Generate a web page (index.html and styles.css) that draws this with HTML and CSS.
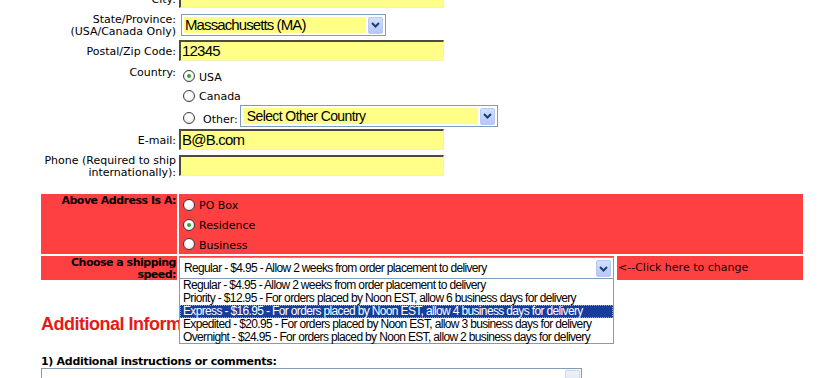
FILE: index.html
```html
<!DOCTYPE html>
<html>

<head>
  <meta charset="utf-8">
  <title>Shipping Information</title>
  <link rel="stylesheet" href="styles.css">
</head>

<body>
  <div id="wrap">
    <div class="row city">
      <div class="lbl">City:</div>
      <div class="fld"><div class="input"></div></div>
    </div>

    <div class="row state">
      <div class="lbl two">State/Province:<br>(USA/Canada Only)</div>
      <div class="fld">
        <div class="select stateSel">
          <span class="selText">Massachusetts (MA)</span>
          <span class="arrow"><svg width="9" height="6" viewBox="0 0 9 6"><path d="M1 1 L4.5 4.5 L8 1" fill="none" stroke="#1d3c78" stroke-width="2"/></svg></span>
        </div>
      </div>
    </div>

    <div class="row postal">
      <div class="lbl mid">Postal/Zip Code:</div>
      <div class="fld"><div class="input">12345</div></div>
    </div>

    <div class="row country">
      <div class="lbl">Country:</div>
      <div class="fld opts">
        <div class="opt first"><span class="radio on"></span><span class="optText">USA</span></div>
        <div class="opt second"><span class="radio"></span><span class="optText">Canada</span></div>
        <div class="opt other">
          <span class="radio"></span><span class="optText">Other:</span>
          <div class="select otherSel">
            <span class="selText">Select Other Country</span>
            <span class="arrow"><svg width="9" height="6" viewBox="0 0 9 6"><path d="M1 1 L4.5 4.5 L8 1" fill="none" stroke="#1d3c78" stroke-width="2"/></svg></span>
          </div>
        </div>
      </div>
    </div>

    <div class="row email">
      <div class="lbl mid">E-mail:</div>
      <div class="fld"><div class="input">B@B.com</div></div>
    </div>

    <div class="row phone">
      <div class="lbl two">Phone (Required to ship<br>internationally):</div>
      <div class="fld"><div class="input"></div></div>
    </div>

    <div class="row red addrType">
      <div class="lbl bold">Above Address Is A:</div>
      <div class="fld opts">
        <div class="opt"><span class="radio"></span><span class="optText">PO Box</span></div>
        <div class="opt"><span class="radio on"></span><span class="optText">Residence</span></div>
        <div class="opt"><span class="radio"></span><span class="optText">Business</span></div>
      </div>
    </div>

    <div class="row red shipping">
      <div class="lbl bold two">Choose a shipping<br>speed:</div>
      <div class="fld shipFld">
        <div class="shipCell">
          <div class="select shipSel">
            <span class="selText">Regular - $4.95 - Allow 2 weeks from order placement to delivery</span>
            <span class="arrow"><svg width="9" height="6" viewBox="0 0 9 6"><path d="M1 1 L4.5 4.5 L8 1" fill="none" stroke="#1d3c78" stroke-width="2"/></svg></span>
          </div>
          <div class="dropList">
            <div class="item">Regular - $4.95 - Allow 2 weeks from order placement to delivery</div>
            <div class="item">Priority - $12.95 - For orders placed by Noon EST, allow 6 business days for delivery</div>
            <div class="item sel">Express - $16.95 - For orders placed by Noon EST, allow 4 business days for delivery</div>
            <div class="item">Expedited - $20.95 - For orders placed by Noon EST, allow 3 business days for delivery</div>
            <div class="item">Overnight - $24.95 - For orders placed by Noon EST, allow 2 business days for delivery</div>
          </div>
        </div>
        <div class="note">&lt;--Click here to change</div>
      </div>
    </div>

    <h2 class="sectionTitle">Additional Information</h2>
    <div class="question">1) Additional instructions or comments:</div>
    <div class="comments">
      <div class="scroll"><span class="scrollUp"></span></div>
    </div>
  </div>
</body>

</html>
```

FILE: styles.css
```css
html,
body {
  margin: 0;
  padding: 0;
  background: #fff;
}

body {
  font-family: "DejaVu Sans", Verdana, sans-serif;
  font-size: 11px;
  color: #000;
  overflow: hidden;
}

#wrap {
  width: 762px;
  margin: -13px 0 0 41px;
}

.row {
  display: grid;
  grid-template-columns: 136px 624px;
  column-gap: 2px;
  align-items: start;
}

.lbl {
  text-align: right;
  padding-right: 1px;
  line-height: 13px;
}

.lbl.two {
  line-height: 12px;
}

.lbl.mid {
  padding-top: 5px;
}

.lbl.bold {
  font-weight: bold;
  letter-spacing: -0.5px;
}

/* text inputs */
.input {
  width: 265px;
  height: 21px;
  box-sizing: border-box;
  background: #ffff88;
  border-top: 2px solid #4b4b40;
  border-left: 2px solid #4b4b40;
  border-right: 1px solid #f2f2c0;
  border-bottom: 1px solid #f2f2c0;
  font-family: "Liberation Sans", Arial, sans-serif;
  font-size: 15px;
  letter-spacing: -0.8px;
  line-height: 18px;
  padding-left: 1px;
}

.city {
  margin-bottom: 6px;
}

.city .lbl {
  padding-top: 6px;
}

.state {
  margin-bottom: 2px;
}

.postal {
  margin-bottom: 5px;
}

.country {
  margin-bottom: 2px;
}

.email {
  margin-bottom: 5px;
}

.phone {
  margin-bottom: 15px;
}

/* selects */
.select {
  display: flex;
  align-items: center;
  box-sizing: border-box;
  border: 1px solid #7f9db9;
  padding: 2px;
  font-family: "Liberation Sans", Arial, sans-serif;
}

.selText {
  flex: 1;
  align-self: stretch;
  white-space: nowrap;
  overflow: hidden;
}

.arrow {
  width: 15px;
  height: 17px;
  box-sizing: border-box;
  margin-left: 2px;
  border: 1px solid #b7c9f2;
  border-radius: 2px;
  background: linear-gradient(#d2e0fd, #b3c8f6);
  display: flex;
  align-items: center;
  justify-content: center;
  flex: none;
}

.stateSel {
  width: 205px;
  height: 22px;
  margin-left: 2px;
}

.stateSel .selText {
  background: #ffff88;
  font-size: 15px;
  letter-spacing: -0.9px;
  line-height: 16px;
  padding-left: 1px;
}

.otherSel {
  width: 258px;
  height: 22px;
  margin-left: 2px;
}

.otherSel .selText {
  background: #ffff88;
  font-size: 14px;
  letter-spacing: -0.6px;
  line-height: 16px;
  padding-left: 4px;
}

/* radio groups */
.opts {
  display: flex;
  flex-direction: column;
}

.opt {
  display: flex;
  align-items: center;
  height: 20px;
}

.radio {
  width: 12px;
  height: 12px;
  box-sizing: border-box;
  border: 1px solid #3d3d3d;
  border-radius: 50%;
  background: radial-gradient(circle at 45% 40%, #fff 35%, #d6d6d6 100%);
  margin-left: 4px;
  position: relative;
  flex: none;
}

.radio.on::after {
  content: "";
  position: absolute;
  left: 3px;
  top: 3px;
  width: 4px;
  height: 4px;
  border-radius: 50%;
  background: #2fa92f;
}

.optText {
  margin-left: 4px;
  line-height: 13px;
  padding-top: 2px;
}

.country .opt.second {
  height: 19px;
  padding-top: 0;
}

.country .opt.other {
  height: 22px;
  align-items: flex-end;
}

.country .opt.other .radio {
  margin-bottom: 3px;
}

.country .opt.other .optText {
  margin-left: 8px;
  padding-top: 0;
  margin-bottom: 1px;
}

/* red rows */
.red .lbl,
.red .fld {
  background: #ff4040;
}

.addrType {
  height: 60px;
  margin-bottom: 2px;
}

.addrType .lbl,
.addrType .fld {
  height: 60px;
}

.addrType .fld {
  padding-top: 1px;
  box-sizing: border-box;
}

.shipping {
  height: 24px;
}

.shipping .lbl {
  height: 24px;
  box-sizing: border-box;
  padding-top: 1px;
}

.shipping .fld.shipFld {
  background: transparent;
  display: flex;
  gap: 3px;
  height: 24px;
}

.shipCell {
  width: 435px;
  background: #ff4040;
  position: relative;
}

.shipSel {
  margin-top: 1px;
  height: 23px;
  background: #fff;
  padding-left: 4px;
}

.shipSel .selText,
.dropList .item {
  font-size: 12px;
  letter-spacing: -0.65px;
  line-height: 17px;
}

.dropList {
  position: absolute;
  left: 0;
  top: 22px;
  width: 435px;
  height: 66px;
  box-sizing: border-box;
  border: 1px solid #7f9db9;
  background: #fff;
  font-family: "Liberation Sans", Arial, sans-serif;
  z-index: 2;
}

.dropList .item {
  line-height: 13px;
  height: 13px;
  padding-left: 3px;
  white-space: nowrap;
}

.dropList .item.sel {
  background: #163c9c;
  color: #fff;
  outline: 1px dotted #8fa3d8;
  outline-offset: -1px;
}

.note {
  flex: 1;
  background: #ff4040;
  padding-left: 1px;
  line-height: 24px;
  color: #1a0000;
}

/* additional info */
.sectionTitle {
  margin: 33px 0 0;
  font-family: "Liberation Sans", Arial, sans-serif;
  font-size: 18px;
  letter-spacing: -0.5px;
  line-height: 22px;
  color: #e31b1b;
}

.question {
  margin-top: 20px;
  font-weight: bold;
  letter-spacing: -0.3px;
  line-height: 13px;
}

.comments {
  width: 541px;
  height: 40px;
  box-sizing: border-box;
  border: 1px solid #7f9db9;
  display: flex;
  justify-content: flex-end;
}

.scroll {
  width: 16px;
  background: #f4f4f0;
}

.scrollUp {
  display: block;
  height: 16px;
  margin: 1px 1px 0 0;
  background: linear-gradient(#eef2f8, #dfe6f2);
  border: 1px solid #cfd8e6;
  border-radius: 2px;
  box-sizing: border-box;
}
```
